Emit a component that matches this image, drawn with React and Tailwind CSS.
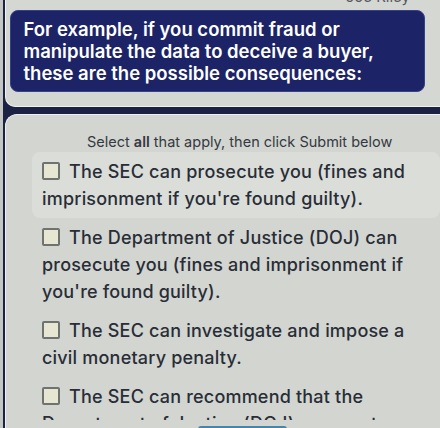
import React from "react";

const Box = () => (
  <span className="inline-block w-[18px] h-[18px] border-2 border-[#6f726f] bg-[#e6e6d3] rounded-[2px] align-middle mr-[9px] relative -top-[2px]" />
);

const options = [
  "The SEC can prosecute you (fines and imprisonment if you're found guilty).",
  "The Department of Justice (DOJ) can prosecute you (fines and imprisonment if you're found guilty).",
  "The SEC can investigate and impose a civil monetary penalty.",
  "The SEC can recommend that the Department of Justice (DOJ) prosecute you.",
];

export default function App() {
  return (
    <div
      className="w-[440px] h-[428px] overflow-hidden relative flex bg-[#c3c6c2]"
      style={{ fontFamily: "Inter, 'Noto Sans', sans-serif" }}
    >
      <div className="w-[3px] shrink-0" />
      <div className="flex-1 bg-[#1c2244] pl-[2px] flex flex-col gap-[7px] min-w-0">
        <div className="relative rounded-bl-[10px] border-l-[1.5px] border-b-[1.5px] border-[#f1f2ee] bg-[#d5d7d2] pt-[10px] pb-[14px] pl-[3.5px] pr-[15px]">
          <div className="absolute -top-[14px] right-[30px] text-[15px] text-[#555a60]">Joe Riley</div>
          <div className="rounded-[8px] bg-[#1c2366] border border-[#34428c] px-[13px] py-[7px] text-white text-[18.5px] leading-[22px] font-semibold">
            For example, if you commit fraud or manipulate the data to deceive a buyer, these are the possible consequences:
          </div>
        </div>
        <div className="flex-1 rounded-tl-[12px] border-l-[1.5px] border-t-[1.5px] border-[#eef0ec] bg-[#d3d5d0] pt-[17px] pl-[26px]">
          <div className="pl-[55px] text-[14.5px] leading-[20px] text-[#343943]">
            Select <span className="font-semibold">all</span> that apply, then click Submit below
          </div>
          <div className="flex flex-col">
            {options.map((t, i) => (
              <div
                key={i}
                className={
                  i === 0
                    ? "rounded-[8px] px-[10px] py-[6px] text-[18px] leading-[27px] font-medium tracking-[0.2px] text-[#282d37] bg-[#dbddd9]"
                    : "rounded-[8px] px-[10px] py-[6px] text-[18px] leading-[27px] font-medium tracking-[0.2px] text-[#282d37]"
                }
              >
                <Box />
                {t}
              </div>
            ))}
          </div>
        </div>
      </div>
      <div className="absolute left-[8px] right-0 top-[420px] bottom-0 bg-[#d3d5d0]" />
      <div className="absolute left-[198px] top-[426px] w-[89px] h-[6px] rounded-t-[3px] bg-[#4485ad]" />
    </div>
  );
}
